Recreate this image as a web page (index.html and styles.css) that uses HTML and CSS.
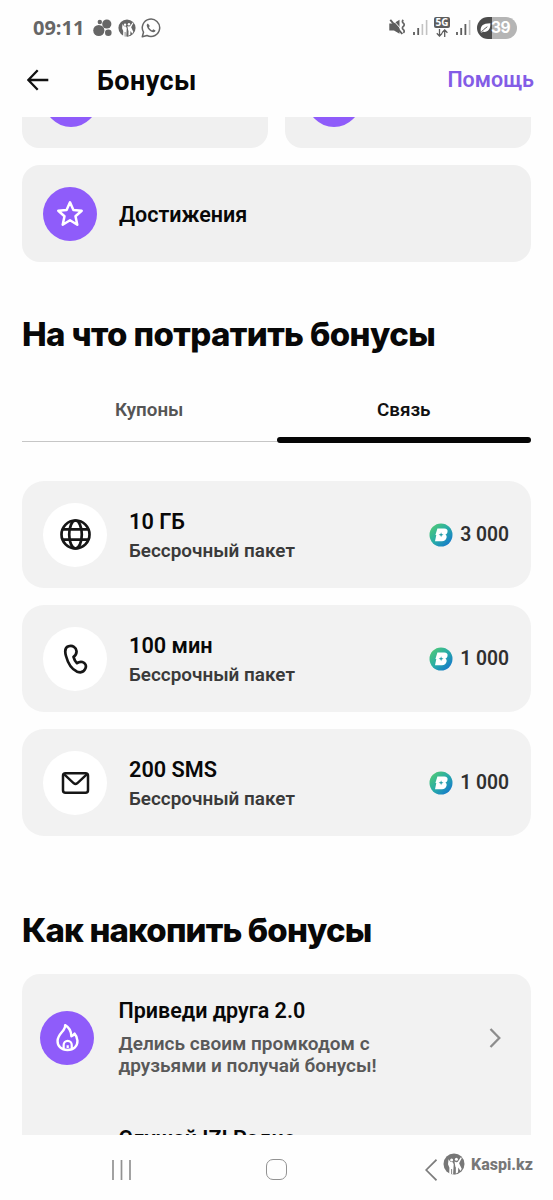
FILE: index.html
```html
<!DOCTYPE html>
<html lang="ru">
<head>
<meta charset="utf-8">
<title>Бонусы</title>
<link rel="stylesheet" href="styles.css">
</head>
<body>
<svg class="defs" width="0" height="0" aria-hidden="true">
  <defs>
    <linearGradient id="coin-fill" x1="0" y1="0" x2="1" y2="1">
      <stop offset="0.1" stop-color="#4fc878"/><stop offset="0.5" stop-color="#27aca8"/><stop offset="0.9" stop-color="#1678cc"/>
    </linearGradient>
    <symbol id="coin" viewBox="0 0 24 24">
      <circle cx="12" cy="12" r="11.5" fill="url(#coin-fill)"/>
      <path d="M8.400 5.600h6.800c2.600 0 3.800 1.300 3.300 3.300-.3 1.300-1.100 2.200-2.200 2.700 1.100.5 1.600 1.500 1.300 3-.5 2.400-2.200 3.700-4.600 3.700H6l1.300-6.300-.9-.1z" fill="#fff"/>
      <path d="M12.100 9.200l.6 1.900 1.900.6-1.900.7-.6 1.900-.6-1.900-1.900-.7 1.900-.6z" fill="#269ea9"/>
    </symbol>
    <symbol id="kaspi" viewBox="0 0 22 22">
      <circle cx="11" cy="11" r="10.5" fill="currentColor"/>
      <path d="M5.500 6.200l1.800 2.600 2.400.4 1 2-.6 10H6.200l.2-6.400-1.400-3.500zM11.500 8.500l1.700.7 1.400-.2 3.300-4.800.9.800-2.700 5.200 2.600 5.500-1.200 2.200-2.200-3.300-.3 4.800-3 1.500.4-7z" fill="#fff"/>
      <circle cx="8.600" cy="6.900" r="1.500" fill="#fff"/><circle cx="13.400" cy="6.300" r="1.500" fill="#fff"/>
      <path d="M8.200 16h.9v5h-.9zM11 13l1.800 1.500v6.800H11z" fill="currentColor"/>
    </symbol>
  </defs>
</svg>
<div class="screen">
  <div class="status">
    <span class="clock">09:11</span>
    <svg class="st-dots" viewBox="0 0 19 18"><g fill="#666"><circle cx="5.800" cy="11.500" r="5.600"/><circle cx="13.800" cy="5" r="4.600"/><circle cx="6.800" cy="3" r="2.200"/><circle cx="15.300" cy="13.700" r="3.300"/></g></svg>
    <svg class="st-kaspi"><use href="#kaspi"/></svg>
    <svg class="st-wa" viewBox="0 0 20 20"><path d="M1.300 18.700l1.200-4.500A8.700 8.700 0 1 1 6 17.500z" fill="none" stroke="#666" stroke-width="1.500" stroke-linejoin="round"/><path d="M6.900 5.500c-.9.400-1.400 1.300-1.100 2.500.7 3.100 3.300 5.600 6.300 6.200 1.200.2 2.200-.5 2.400-1.600l-2.200-1.300-1.200 1.100c-1.600-.8-2.500-1.700-3.200-3.200L8.800 8z" fill="#666"/></svg>
    <span class="grow"></span>
    <svg class="st-mute" viewBox="0 0 16 16"><path d="M.3 4.500h4.200L10.500.8v14L5 11.500H.3z" fill="#5d5d5d"/><path d="M3.200.2l12 13.300" stroke="#fff" stroke-width="1"/><path d="M1.300.8l12 14.200" stroke="#5d5d5d" stroke-width="1.900"/><path d="M14.300 1q-1.800 1.600 0 3.200t0 3.200 0 3.200 0 3.200" fill="none" stroke="#666" stroke-width="1.700"/></svg>
    <svg class="st-signal" viewBox="0 0 15 15"><path d="M1 12v3M5.200 8v7" stroke="#5d5d5d" stroke-width="1.800"/><path d="M9.400 4v11M13.600 0v15" stroke="#c2c2c2" stroke-width="1.600"/></svg>
    <span class="net"><b>5G</b><svg viewBox="0 0 12 8"><path d="M3.500 0v7M.8 4.300l2.700 2.800 2.700-2.800M8.700 8V1M6 3.700L8.700.9l2.700 2.800" fill="none" stroke="#5d5d5d" stroke-width="1.300"/></svg></span>
    <svg class="st-signal" viewBox="0 0 15 15"><path d="M1 12v3M5.200 8v7M9.400 4v11" stroke="#5d5d5d" stroke-width="1.800"/><path d="M13.600 0v15" stroke="#c2c2c2" stroke-width="1.600"/></svg>
    <span class="battery"><svg viewBox="0 0 12 12"><path d="M.8 9.800C.2 4 3 .9 11.300.9 11.600 7 9 10.800 3.500 10.200L1 11.500" fill="#fff"/><path d="M.5 11.500Q3.500 7.500 8 4.600" fill="none" stroke="#4c4c4c" stroke-width="1"/></svg><span>39</span></span>
  </div>

  <header class="topbar">
    <svg class="back" viewBox="0 0 22 22"><path d="M21.300 11H1.500M10.700 1.200L1.300 11l9.400 9.700" fill="none" stroke="#111" stroke-width="2.300"/></svg>
    <h1>Бонусы</h1>
    <a class="help">Помощь</a>
  </header>

  <main class="content">
    <div class="tiles">
      <div class="tile"><span class="purple"></span></div>
      <div class="tile"><span class="purple"></span></div>
    </div>
    <section class="achieve">
      <span class="purple"><svg class="star" viewBox="0 0 28 28"><path d="M14 2.300l3.400 7.600 8.300.8-6.200 5.600 1.800 8.400-7.300-4.400-7.300 4.400 1.800-8.400-6.200-5.600 8.300-.8z" fill="none" stroke="#fff" stroke-width="2.500" stroke-linejoin="round"/></svg></span>
      <span class="achieve-text">Достижения</span>
    </section>

    <h2 class="spend">На что потратить бонусы</h2>
    <nav class="tabs"><div class="tab">Купоны</div><div class="tab on">Связь</div></nav>

    <div class="packs">
      <article class="pack">
        <span class="disc"><svg viewBox="0 0 32 32"><g fill="none" stroke="#161616" stroke-width="2.700"><circle cx="16.500" cy="15.500" r="14"/><ellipse cx="16.500" cy="15.500" rx="6.300" ry="14"/><path d="M3.500 10.300h26M3.500 20.700h26"/></g></svg></span>
        <div class="info"><div class="name">10 ГБ</div><div class="sub">Бессрочный пакет</div></div>
        <svg class="coin"><use href="#coin"/></svg><span class="price">3 000</span>
      </article>
      <article class="pack">
        <span class="disc"><svg viewBox="0 0 32 32"><path d="M9.500 3.300C6.200 4.300 5.600 8 7 13c1.900 7.200 6.200 13.600 11.200 15.700 3.600 1.300 6.700.2 8.200-3.200 1.300-2.800-.1-5.700-3-6.500-2.300-.6-4 .2-5.400 1.200-1.700-1.600-2.800-3.600-3.500-6.400 1.900-1.300 3.200-3.200 3-5.700C17.100 4.300 13.700 2 9.500 3.300z" fill="none" stroke="#161616" stroke-width="2.700" stroke-linejoin="round"/></svg></span>
        <div class="info"><div class="name">100 мин</div><div class="sub">Бессрочный пакет</div></div>
        <svg class="coin"><use href="#coin"/></svg><span class="price">1 000</span>
      </article>
      <article class="pack">
        <span class="disc"><svg viewBox="0 0 32 32"><rect x="4" y="6.300" width="25" height="19.500" rx="2.500" fill="none" stroke="#161616" stroke-width="2.500"/><path d="M5 7.100l9.800 9.200q1.700 1.300 3.400 0L28 7.100" fill="none" stroke="#161616" stroke-width="2.400"/></svg></span>
        <div class="info"><div class="name">200 SMS</div><div class="sub">Бессрочный пакет</div></div>
        <svg class="coin"><use href="#coin"/></svg><span class="price">1 000</span>
      </article>
    </div>

    <h2 class="earn">Как накопить бонусы</h2>
    <section class="ways">
      <div class="way">
        <span class="purple"><svg class="flame" viewBox="0 0 28 30"><path d="M11.500 2.200C12.500 8 4 10.500 3.700 18.500c-.2 5.600 4 9.500 10.300 9.500 6.500 0 10.600-4 10.300-9.700-.2-3.300-1.200-5.300-3-7.300-.8 1.600-2 2.500-3.300 2.800C18 8.500 15.500 4.500 11.500 2.200z" fill="none" stroke="#fff" stroke-width="2.500" stroke-linejoin="round"/><path d="M10 27v-4.300a4.200 4.200 0 0 1 8.400 0V27M14.200 23v3" fill="none" stroke="#fff" stroke-width="2.300"/></svg></span>
        <div class="way-text"><div class="way-name">Приведи друга 2.0</div><p>Делись своим промкодом с<br>друзьями и получай бонусы!</p></div>
        <svg class="chev" viewBox="0 0 12 20"><path d="M1.500 1L10.300 10 1.500 19" fill="none" stroke="#8d8d8d" stroke-width="2.300"/></svg>
      </div>
      <div class="way-next">Слушай IZI Радио</div>
    </section>
  </main>

  <footer class="sysnav">
    <svg class="recent" viewBox="0 0 20 20"><path d="M1.500 0v20M10 0v20M18.500 0v20" stroke="#929292" stroke-width="1.700"/></svg>
    <span class="home"></span>
    <svg class="nav-back" viewBox="0 0 12 22"><path d="M11.500.7L1.200 11l10.300 10.300" fill="none" stroke="#7d7d7d" stroke-width="1.700"/></svg>
    <svg class="mark"><use href="#kaspi"/></svg>
    <span class="brand">Kaspi.kz</span>
  </footer>
</div>
</body>
</html>
```
FILE: styles.css
```css
* { box-sizing: border-box; }
body { margin: 0; background: #fefefe; color: #080808; font-family: Roboto, "Liberation Sans", sans-serif; font-weight: 600; white-space: nowrap; }
svg { display: block; flex: none; }
.defs { position: absolute; }
h1, h2, p { margin: 0; }
.screen { width: 553px; height: 1200px; display: flex; flex-direction: column; overflow: hidden; }
.grow { flex: 1; }

.status { height: 55px; padding: 0 36px 0 33px; display: flex; align-items: center; color: #666; }
.clock { font: 700 20px/20px "Open Sans", sans-serif; width: 60px; }
.st-dots { width: 19px; height: 18px; margin-right: 6px; }
.st-kaspi { width: 18px; height: 18px; margin-right: 5px; }
.st-kaspi use, .mark use { width: 100%; height: 100%; }
.st-wa { width: 20px; height: 20px; }
.st-mute { width: 16px; height: 16px; margin: -2px 8px 0 0; }
.st-signal { width: 15px; height: 15px; margin-right: 6px; }
.net { width: 16px; margin: -2px 6px 0 0; display: flex; flex-direction: column; align-items: center; }
.net b { width: 16px; height: 11px; border-radius: 2px; background: #5d5d5d; color: #fff; font: 700 10px/11px "Open Sans", sans-serif; text-align: center; }
.net svg { width: 12px; height: 8px; margin-top: 1px; }
.battery { width: 40px; height: 22px; border-radius: 11px; background: linear-gradient(90deg, #4c4c4c 15px, #b5b5b5 15px); display: flex; align-items: center; color: #fff; font: 700 15.500px/22px Inter, sans-serif; padding-left: 3px; }
.battery svg { width: 11px; height: 12px; }
.battery span { letter-spacing: -.5px; }

.topbar { height: 62px; padding: 0 19px 13px 27px; display: flex; align-items: center; }
.back { width: 22px; height: 22px; margin-right: 48px; }
.topbar h1 { font-size: 27px; font-weight: 700; line-height: 30px; letter-spacing: .4px; flex: 1; padding-top: 2px; }
.help { color: #835ce6; font-size: 21.500px; line-height: 24px; }

.content { height: 1018px; overflow: hidden; padding: 0 22px; }
.tiles { display: grid; grid-template-columns: 246px 246px; gap: 17px; height: 31px; }
.tile { background: #f0f0f0; border-radius: 0 0 17px 17px; overflow: hidden; padding: 0 0 21px 22px; display: flex; align-items: flex-end; }
.purple { width: 54px; height: 54px; flex: none; border-radius: 50%; background: #8f5cfa; display: flex; align-items: center; justify-content: center; }
.achieve { margin-top: 17px; height: 97px; border-radius: 18px; background: #f0f0f0; display: flex; align-items: center; padding-left: 21px; }
.star { width: 28px; height: 28px; }
.achieve-text { font-size: 21.500px; font-weight: 650; line-height: 26px; padding-top: 2px; margin-left: 22px; }
h2 { font: 800 33px/40px Inter, sans-serif; }
.spend { margin-top: 52px; letter-spacing: -.6px; }
.tabs { display: flex; margin-top: 34px; height: 55px; font-size: 18.800px; line-height: 24px; text-align: center; }
.tab { flex: 1; height: 54px; padding-top: 10px; border-bottom: 1.500px solid #c6c6c6; color: #555; }
.tab.on { color: #111; border: 0; display: flex; flex-direction: column; height: 55px; justify-content: space-between; }
.tab.on::after { content: ""; height: 6px; border-radius: 3px; background: #050505; }

.packs { display: grid; gap: 17px; margin-top: 38px; }
.pack { height: 107px; border-radius: 22px; background: #f2f2f2; display: flex; align-items: center; padding: 0 22px 0 21px; }
.disc { width: 64px; height: 64px; border-radius: 50%; background: #fff; display: flex; align-items: center; justify-content: center; margin-right: 22px; }
.disc svg { width: 32px; height: 32px; }
.info { flex: 1; padding-top: 2px; }
.name { font-size: 21.700px; font-weight: 650; line-height: 30px; height: 30px; }
.sub { font-size: 18.900px; line-height: 28px; color: #3a3a3a; }
.coin { width: 24px; height: 24px; margin-right: 7px; }
.price { font-size: 19.300px; line-height: 24px; padding-top: 1px; color: #303030; }

.earn { margin-top: 74px; letter-spacing: -.85px; }
.ways { margin-top: 24px; background: #f2f2f2; border-radius: 18px; height: 200px; padding: 22px 30px 0 18px; }
.way { display: flex; align-items: center; height: 83px; }
.flame { width: 27px; height: 29px; }
.way-text { margin-left: 24.500px; padding-bottom: 2px; flex: 1; }
.way-name { font-size: 21.500px; font-weight: 650; line-height: 28px; margin-bottom: 8px; }
.way p { font-size: 19px; line-height: 22px; color: #595959; }
.chev { width: 12px; height: 20px; }
.way-next { font-size: 21.500px; line-height: 28px; margin: 46px 0 0 78.500px; }

.sysnav { height: 65px; padding-left: 111px; display: flex; align-items: center; }
.recent { width: 21px; height: 20px; margin-top: 4px; }
.home { width: 21px; height: 21px; border: 1.700px solid #929292; border-radius: 7px; margin: 4px 0 0 134px; }
.nav-back { width: 12px; height: 22px; margin: 4px 6px 0 138px; }
.mark { width: 22px; height: 22px; color: #777; margin: -7px 6px 0 0; }
.brand { font-size: 16px; font-weight: 800; color: #777; margin-top: -7px; }
```
